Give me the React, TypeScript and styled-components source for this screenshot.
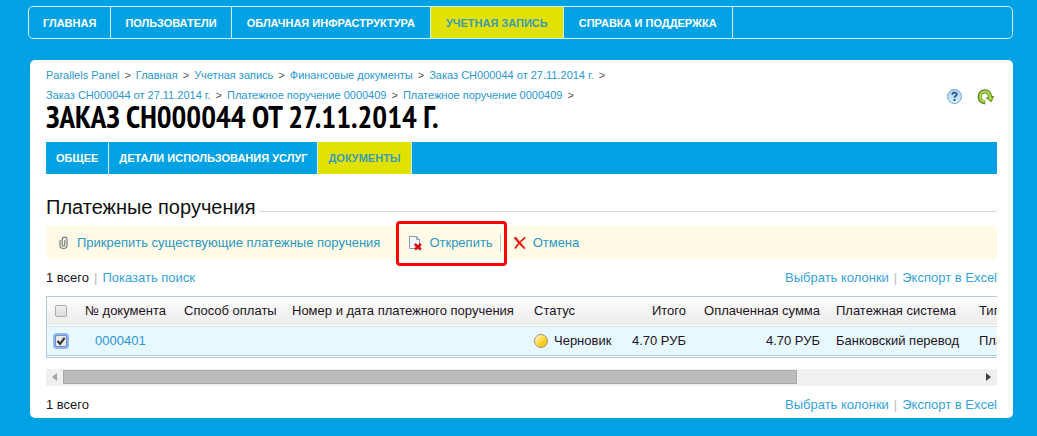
import React from "react";
import styled, { createGlobalStyle, css } from "styled-components";

const GlobalStyle = createGlobalStyle`
  * { box-sizing: border-box; }
  body {
    margin: 0;
    background: #00a2e3;
    color: #1c1420;
    font-family: "Liberation Sans", Arial, sans-serif;
    font-size: 13px;
    line-height: 16px;
  }
  a { color: #2a97d0; text-decoration: none; }
  button { font: inherit; border: 0; background: none; padding: 0; cursor: pointer; }
`;

const Page = styled.div`
  padding: 6px 24px 18px 28px;
`;

const MainNav = styled.nav`
  display: flex;
  height: 33px;
  border: 1px solid #d4effb;
  border-radius: 5px;
`;

const NavLink = styled.a<{ $active?: boolean; $wide?: boolean }>`
  display: flex;
  align-items: center;
  padding: 0 ${(p) => (p.$wide ? 15 : 14)}px;
  border-right: 1px solid #d4effb;
  background: ${(p) => (p.$active ? "#e2e200" : "transparent")};
  color: ${(p) => (p.$active ? "#3b9db4" : "#fff")};
  font-size: 11px;
  font-weight: bold;
  text-transform: uppercase;
  white-space: nowrap;
`;

const Panel = styled.main`
  margin: 21px 0 0 2px;
  padding: 5px 16px;
  background: #fff;
  border-radius: 5px;
`;

const PanelHead = styled.header`
  display: flex;
  justify-content: space-between;
`;

const Crumbs = styled.nav`
  font-size: 11px;
  line-height: 20px;
  color: #555;
`;

const CrumbRow = styled.div`
  display: flex;
  gap: 5px;
`;

const Title = styled.h1`
  margin: 0;
  color: #000;
  font-family: "PT Sans Narrow", "Liberation Sans Narrow", "Liberation Sans", sans-serif;
  font-size: 31px;
  font-weight: bold;
  line-height: 24px;
  white-space: nowrap;
`;

const HeadTools = styled.div`
  display: flex;
  align-items: flex-end;
  gap: 14px;
  padding-right: 3px;
`;

const IconButton = styled.button`
  display: flex;
  width: 17px;
  height: 17px;
`;

const Tabs = styled(MainNav)`
  height: 32px;
  margin-top: 13px;
  border: 0;
  border-radius: 0;
  background: #00a2e3;
`;

const Tab = styled(NavLink)`
  padding: 0 10px;
`;

const SectionTitle = styled.h2`
  display: flex;
  align-items: center;
  gap: 4px;
  margin: 21px 0 6px;
  color: #111;
  font-size: 20px;
  font-weight: normal;
  line-height: 25px;
  &::after {
    content: "";
    flex: 1;
    height: 1px;
    margin-top: 8px;
    background: #d5d8dd;
  }
`;

const Toolbar = styled.div`
  display: flex;
  align-items: center;
  height: 33px;
  padding-left: 10px;
  background: #fffbe6;
  border-radius: 4px;
`;

const Action = styled.button<{ $divided?: boolean }>`
  position: relative;
  display: flex;
  align-items: center;
  gap: 6px;
  height: 18px;
  color: #2a97c4;
  white-space: nowrap;
  ${(p) =>
    p.$divided &&
    css`
      margin: 0 12px 0 28px;
      padding-right: 7px;
      border-right: 1px solid #a9cdd8;
    `}
`;

const Highlight = styled.span`
  position: absolute;
  inset: -13px -7px -14px -12px;
  border: 3px solid #f00;
  border-radius: 4px;
  pointer-events: none;
`;

const Summary = styled.div`
  display: flex;
  justify-content: space-between;
  padding: 11px 0 10px;
`;

const Footer = styled(Summary)`
  padding-bottom: 0;
`;

const Links = styled.div`
  display: flex;
  gap: 5px;
  white-space: nowrap;
  a { color: #36a3dc; }
`;

const Bar = styled.span`
  color: #b9bcc0;
`;

const TableClip = styled.div`
  overflow: hidden;
  padding-bottom: 1px;
  border: 1px solid #b5cbd5;
  border-width: 1px 0 1px 1px;
`;

const Table = styled.table`
  width: 1060px;
  table-layout: fixed;
  border-collapse: collapse;
`;

const Cell = styled.td<{ $right?: boolean; $indent?: boolean }>`
  height: 29px;
  padding: 0 8px;
  text-align: ${(p) => (p.$right ? "right" : "left")};
  font-weight: normal;
  white-space: nowrap;
  ${(p) => p.$indent && "padding-left: 18px;"}
`;

const HeadRow = styled.tr`
  background: linear-gradient(#fdfdfd, #ececec);
  border-bottom: 1px solid #dadcde;
`;

const BodyRow = styled.tr`
  background: #e8f8ff;
  border-bottom: 1px solid #b5cbd5;
`;

const Check = styled.input`
  appearance: none;
  display: block;
  width: 12px;
  height: 12px;
  margin: 0;
  border: 1px solid #adadad;
  border-radius: 2px;
  background: linear-gradient(#eee, #dedede);
  &:checked {
    border-color: #6f8fc4;
    background: #e9e9e9
      url("data:image/svg+xml,%3Csvg xmlns='http://www.w3.org/2000/svg' viewBox='0 0 10 10'%3E%3Cpath d='M1.5 5l2.6 2.8L8.6 1.8' fill='none' stroke='%23333' stroke-width='2.2'/%3E%3C/svg%3E");
    box-shadow: 0 0 0 2px #90b4f0;
  }
`;

const Status = styled.span`
  display: flex;
  align-items: center;
  gap: 6px;
`;

const Dot = styled.i`
  width: 14px;
  height: 14px;
  border: 1px solid #9c9488;
  border-radius: 50%;
  background: linear-gradient(135deg, #fff3ae 15%, #ffd52e 55%, #f4b800);
`;

const ScrollBar = styled.div`
  display: flex;
  align-items: center;
  height: 17px;
  margin-top: 11px;
  background: #f0f0f0;
`;

const ScrollButton = styled.button`
  display: flex;
  align-items: center;
  justify-content: center;
  width: 17px;
  height: 17px;
`;

const Track = styled.div`
  flex: 1;
`;

const Thumb = styled.div`
  width: 80%;
  height: 14px;
  border: 1px solid #a8a8a8;
  background: #bcbcbc;
`;

const crumbs = [
  ["Parallels Panel", "Главная", "Учетная запись", "Финансовые документы", "Заказ CH000044 от 27.11.2014 г."],
  ["Заказ CH000044 от 27.11.2014 г.", "Платежное поручение 0000409", "Платежное поручение 0000409"],
];

const columns = [30, 99, 108, 242, 95, 73, 134, 143, 136];

const ExportLinks = () => (
  <Links>
    <a href="#columns">Выбрать колонки</a>
    <Bar>|</Bar>
    <a href="#excel">Экспорт в Excel</a>
  </Links>
);

const HelpIcon = () => (
  <svg width="17" height="17" viewBox="0 0 17 17">
    <defs>
      <linearGradient id="help" x1="0" y1="0" x2="0" y2="1">
        <stop offset="0" stopColor="#a9cfee" />
        <stop offset="1" stopColor="#d9f2fd" />
      </linearGradient>
    </defs>
    <circle cx="8.5" cy="8.5" r="7" fill="url(#help)" stroke="#75a5d0" />
    <path d="M6.3 6.6c.1-2.7 4.6-2.5 4.4 0-.1 1.5-2.100 1.5-2.200 3.100M8.500 11v2" fill="none" stroke="#28538f" strokeWidth="1.8" />
  </svg>
);

const RefreshIcon = () => (
  <svg width="17" height="17" viewBox="0 0 17 17">
    <path d="M8.300 14.300C.8 14.300 1 3.400 7.800 3.400c3.400 0 5.400 2.400 5.300 6" fill="none" stroke="#5f8a1c" strokeWidth="4.200" />
    <path d="M9.300 10l7.300-1.800-2.300 5.500z" fill="#a9d143" stroke="#5f8a1c" strokeLinejoin="round" />
    <path d="M7.800 13.900C1.500 13.600 1.800 3.500 7.800 3.500c3.300 0 5.200 2.500 5.200 6.600" fill="none" stroke="#b4db58" strokeWidth="2.200" />
  </svg>
);

const ClipIcon = () => (
  <svg width="15" height="16" viewBox="0 0 15 16">
    <path d="M4 5v5.500c0 4 7 4 7 0V4.500c0-3.300-4.800-3.300-4.800 0v5.300c0 1.800 2.600 1.800 2.600 0V5" fill="none" stroke="#777b82" strokeWidth="1.200" />
  </svg>
);

const DetachIcon = () => (
  <svg width="15" height="16" viewBox="0 0 15 16">
    <path d="M1.500 1.500h7l3 3v9h-10z" fill="#f4f7fb" stroke="#8f9bb0" />
    <path d="M8.500 1.500v3h3" fill="none" stroke="#8f9bb0" />
    <path d="M6.800 9l6 5.500M13 9l-6 5.500" stroke="#d40d12" strokeWidth="2.600" />
  </svg>
);

const CancelIcon = () => (
  <svg width="14" height="14" viewBox="0 0 14 14">
    <path d="M1 1.800l2-.6C5.500 4.500 9 8.500 12.300 12.200l-1 .6C7.500 9.500 4 6 1 1.800z" fill="#e0140f" stroke="#e0140f" strokeWidth=".6" />
    <path d="M12.300 1.400C8 4.500 4.500 8.500 2 12.500" fill="none" stroke="#e0140f" strokeWidth="1.600" />
  </svg>
);

export default function App() {
  return (
    <>
      <GlobalStyle />
      <Page>
        <MainNav>
          <NavLink href="#home">Главная</NavLink>
          <NavLink href="#users">Пользователи</NavLink>
          <NavLink href="#cloud" $wide>Облачная инфраструктура</NavLink>
          <NavLink href="#account" $wide $active>Учетная запись</NavLink>
          <NavLink href="#support" $wide>Справка и поддержка</NavLink>
        </MainNav>
        <Panel>
          <PanelHead>
            <Crumbs>
              {crumbs.map((row, i) => (
                <CrumbRow key={i}>
                  {row.map((name, j) => (
                    <React.Fragment key={j}>
                      <a href="#crumb">{name}</a>
                      <span>&gt;</span>
                    </React.Fragment>
                  ))}
                </CrumbRow>
              ))}
            </Crumbs>
            <HeadTools>
              <IconButton aria-label="Справка"><HelpIcon /></IconButton>
              <IconButton aria-label="Обновить"><RefreshIcon /></IconButton>
            </HeadTools>
          </PanelHead>
          <Title>ЗАКАЗ CH000044 ОТ 27.11.2014 Г.</Title>
          <Tabs>
            <Tab href="#general">Общее</Tab>
            <Tab href="#usage">Детали использования услуг</Tab>
            <Tab href="#documents" $active>Документы</Tab>
          </Tabs>
          <SectionTitle>Платежные поручения</SectionTitle>
          <Toolbar>
            <Action><ClipIcon />Прикрепить существующие платежные поручения</Action>
            <Action $divided><DetachIcon />Открепить<Highlight /></Action>
            <Action><CancelIcon />Отмена</Action>
          </Toolbar>
          <Summary>
            <Links>
              <span>1 всего</span>
              <Bar>|</Bar>
              <a href="#search">Показать поиск</a>
            </Links>
            <ExportLinks />
          </Summary>
          <TableClip>
            <Table>
              <colgroup>{columns.map((w, i) => <col key={i} width={w} />)}</colgroup>
              <thead>
                <HeadRow>
                  <Cell as="th"><Check type="checkbox" aria-label="Выбрать все" /></Cell>
                  <Cell as="th">№ документа</Cell>
                  <Cell as="th">Способ оплаты</Cell>
                  <Cell as="th">Номер и дата платежного поручения</Cell>
                  <Cell as="th">Статус</Cell>
                  <Cell as="th" $right>Итого</Cell>
                  <Cell as="th" $right>Оплаченная сумма</Cell>
                  <Cell as="th">Платежная система</Cell>
                  <Cell as="th">Тип</Cell>
                </HeadRow>
              </thead>
              <tbody>
                <BodyRow>
                  <Cell><Check type="checkbox" defaultChecked aria-label="Выбрать 0000401" /></Cell>
                  <Cell $indent><a href="#doc">0000401</a></Cell>
                  <Cell />
                  <Cell />
                  <Cell><Status><Dot />Черновик</Status></Cell>
                  <Cell $right>4.70 РУБ</Cell>
                  <Cell $right>4.70 РУБ</Cell>
                  <Cell>Банковский перевод</Cell>
                  <Cell>Платеж</Cell>
                </BodyRow>
              </tbody>
            </Table>
          </TableClip>
          <ScrollBar>
            <ScrollButton aria-label="Прокрутить влево">
              <svg width="5" height="8"><path d="M5 0v8L0 4z" fill="#a3a3a3" /></svg>
            </ScrollButton>
            <Track><Thumb /></Track>
            <ScrollButton aria-label="Прокрутить вправо">
              <svg width="5" height="8"><path d="M0 0v8l5-4z" fill="#404040" /></svg>
            </ScrollButton>
          </ScrollBar>
          <Footer>
            <span>1 всего</span>
            <ExportLinks />
          </Footer>
        </Panel>
      </Page>
    </>
  );
}
